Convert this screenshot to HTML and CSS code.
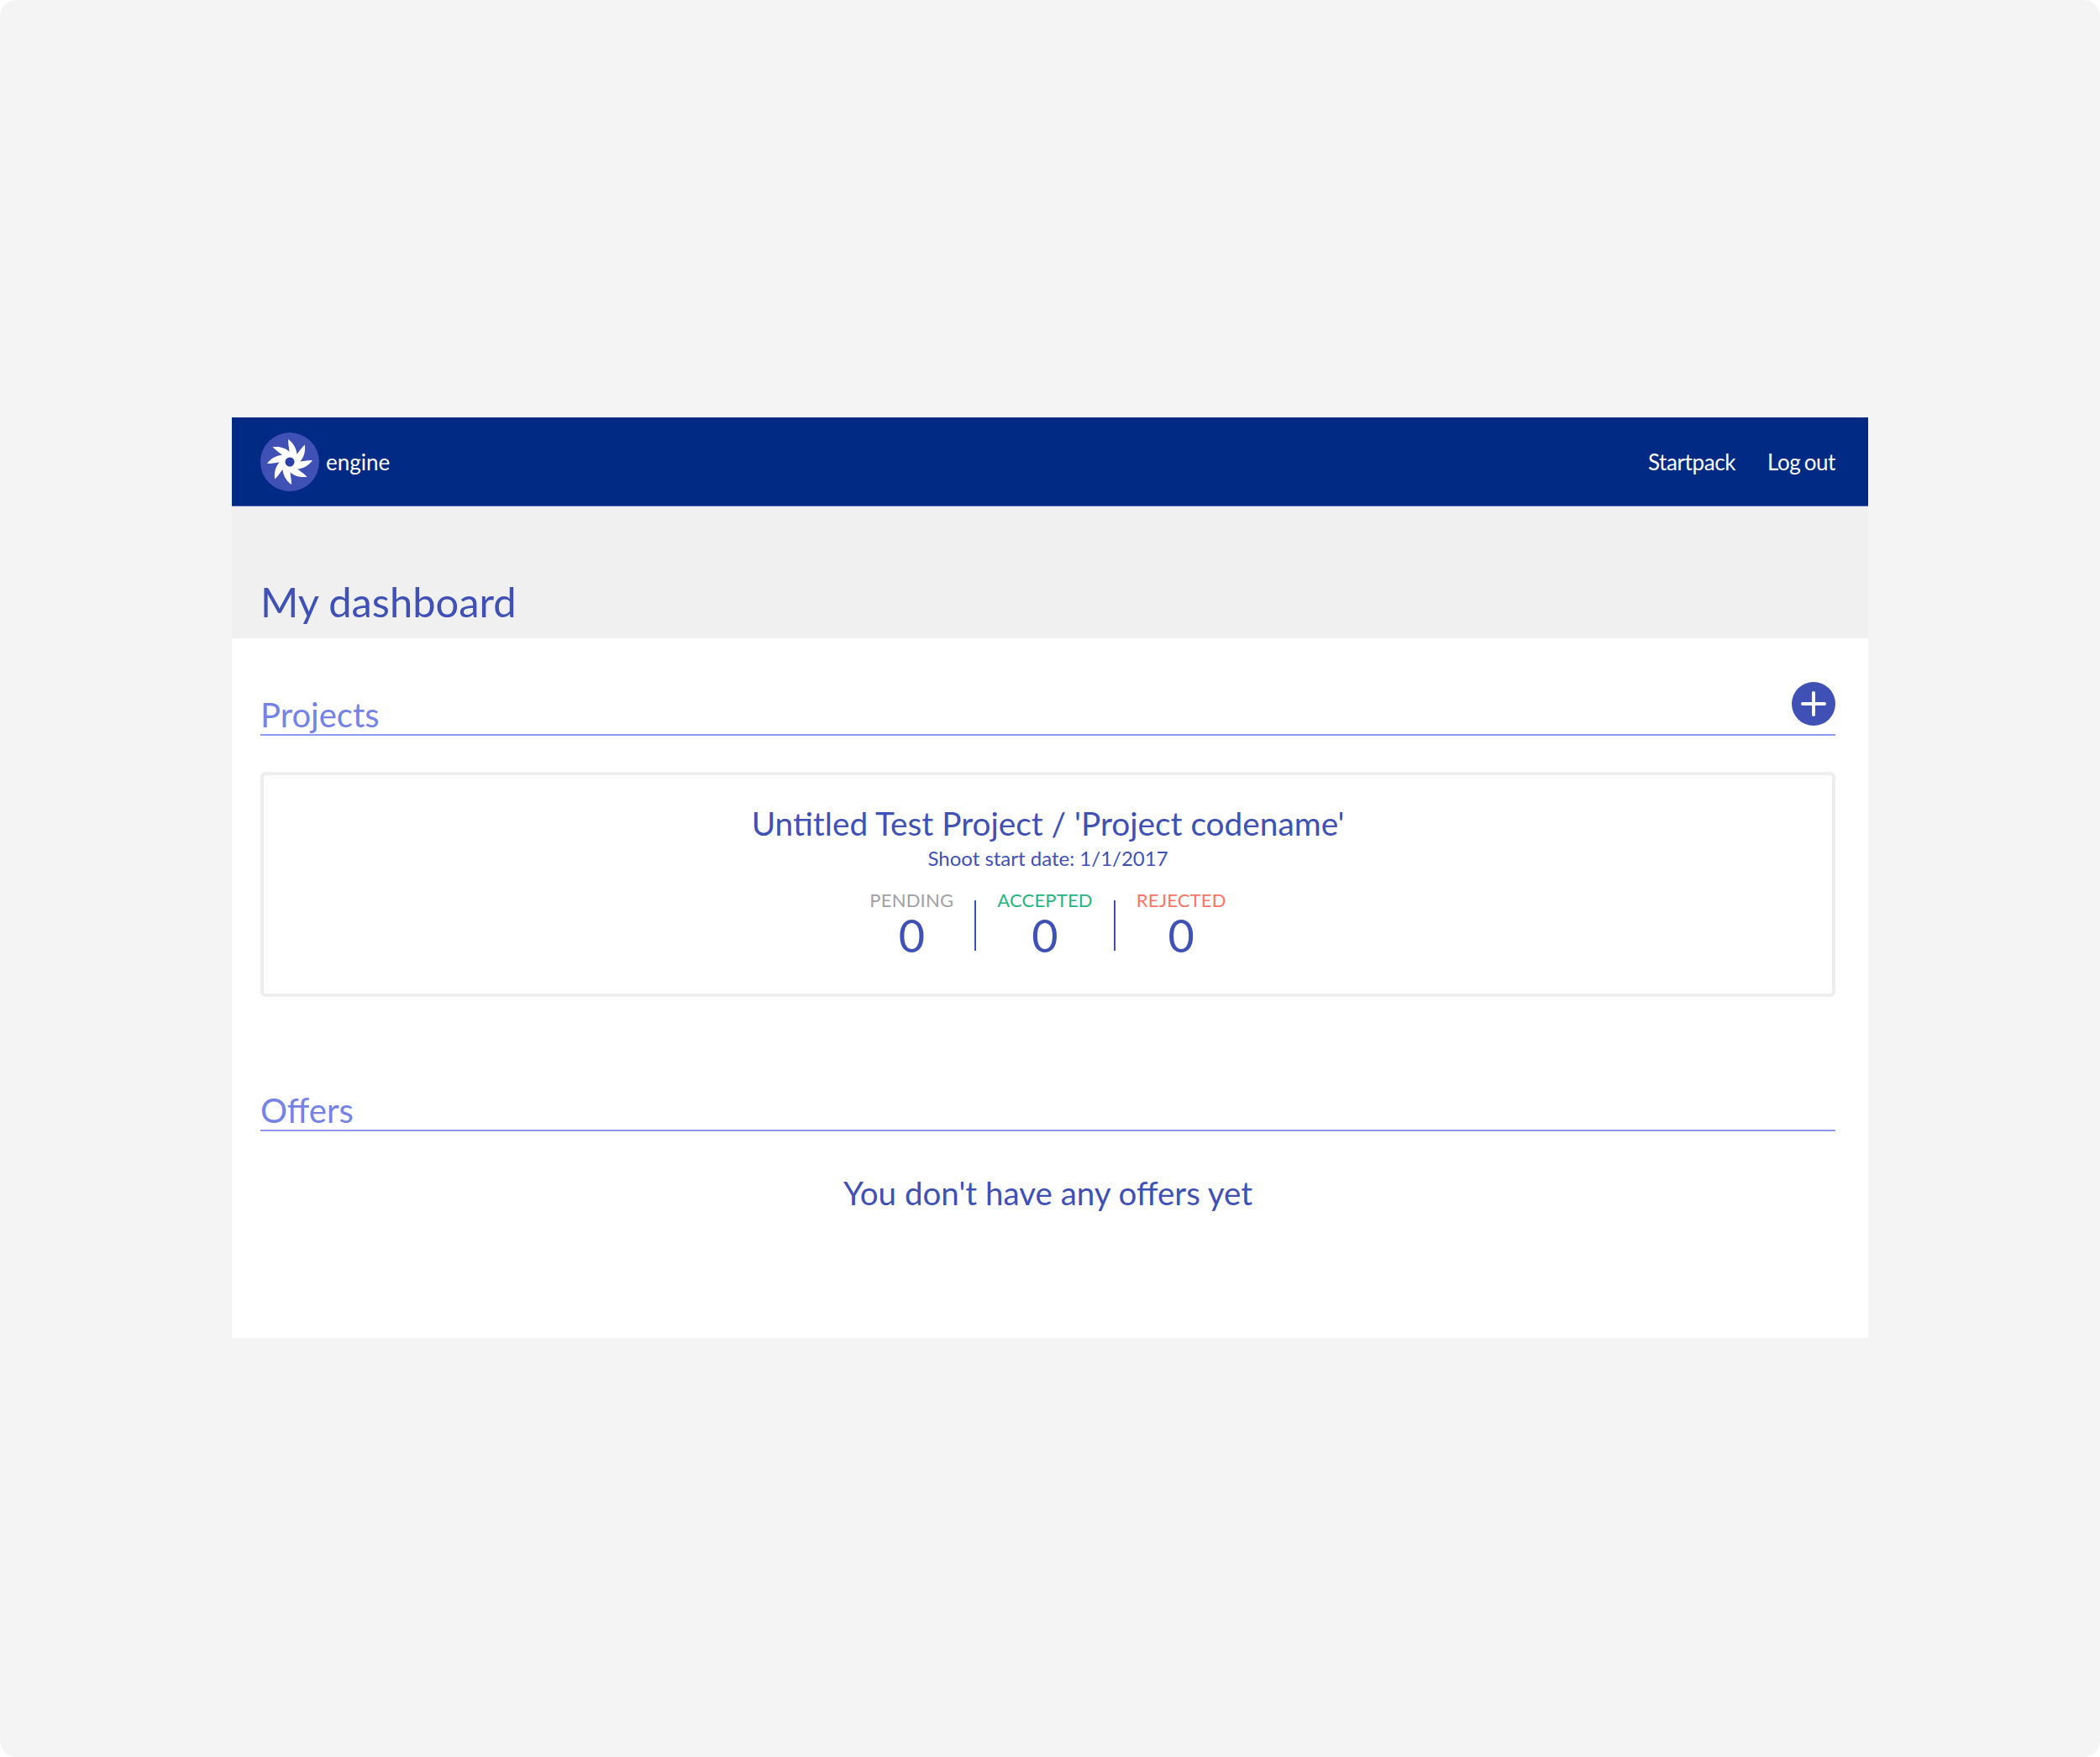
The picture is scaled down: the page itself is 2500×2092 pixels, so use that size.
FILE: index.html
```html
<!DOCTYPE html>
<html lang="en">
<head>
    <meta charset="UTF-8">
    <title>My dashboard - engine</title>
    <link rel="stylesheet" href="styles.css">
</head>
<body>
    <div class="page">
        <div class="app">
            <!-- Navigation Bar -->
            <nav class="topbar">
                <a class="brand" href="#">
                    <svg class="brand-logo" viewBox="-35 -35 70 70" aria-hidden="true">
                        <circle r="35" fill="#4051b5"/>
                        <g fill="#ffffff">
                            <path id="blade" d="M-2 -27 C4 -23 9.5 -15 8.5 -4 L0 -4 C0 -13 -2 -20 -2 -27 Z"/>
                            <use href="#blade" transform="rotate(45)"/>
                            <use href="#blade" transform="rotate(90)"/>
                            <use href="#blade" transform="rotate(135)"/>
                            <use href="#blade" transform="rotate(180)"/>
                            <use href="#blade" transform="rotate(225)"/>
                            <use href="#blade" transform="rotate(270)"/>
                            <use href="#blade" transform="rotate(315)"/>
                        </g>
                        <circle r="5.5" fill="#2c3ea6"/>
                    </svg>
                    <span>engine</span>
                </a>
                <ul class="topbar-links">
                    <li><a href="#">Startpack</a></li>
                    <li><a href="#">Log out</a></li>
                </ul>
            </nav>

            <!-- Page Title -->
            <header class="page-title">
                <h1>My dashboard</h1>
            </header>

            <!-- Main Content -->
            <main class="content">
                <section class="projects">
                    <div class="section-head">
                        <h2>Projects</h2>
                        <a class="add-button" href="#" aria-label="Add project">
                            <svg viewBox="0 0 52 52" aria-hidden="true">
                                <path d="M26 13 V39 M13 26 H39" stroke="#ffffff" stroke-width="4" stroke-linecap="round" fill="none"/>
                            </svg>
                        </a>
                    </div>

                    <div class="project-card">
                        <h3>Untitled Test Project / 'Project codename'</h3>
                        <p class="shoot-date">Shoot start date: 1/1/2017</p>
                        <div class="stats">
                            <div class="stat stat-pending">
                                <span class="stat-label">PENDING</span>
                                <span class="stat-value">0</span>
                            </div>
                            <div class="stat stat-accepted">
                                <span class="stat-label">ACCEPTED</span>
                                <span class="stat-value">0</span>
                            </div>
                            <div class="stat stat-rejected">
                                <span class="stat-label">REJECTED</span>
                                <span class="stat-value">0</span>
                            </div>
                        </div>
                    </div>
                </section>

                <section class="offers">
                    <div class="section-head">
                        <h2>Offers</h2>
                    </div>
                    <p class="empty-note">You don't have any offers yet</p>
                </section>
            </main>
        </div>
    </div>
</body>
</html>
```

FILE: styles.css
```css
/* Global Styles */
html, body {
    height: 100%;
}

body {
    margin: 0;
    background-color: #ffffff;
    font-family: 'Lato', sans-serif;
    color: #4051b5;
}

.page {
    box-sizing: border-box;
    min-height: 100%;
    padding: 497px 276px 0 276px;
    background-color: #f4f4f4;
    border-radius: 20px;
}

.app {
    background-color: #ffffff;
    height: 1096px;
}

/* Top Bar */
.topbar {
    height: 106px;
    padding: 0 39px 0 34px;
    display: flex;
    justify-content: space-between;
    align-items: center;
    background-color: #002a83;
    border-bottom: 1px solid #5a6cc4;
    box-sizing: border-box;
}

.topbar a {
    color: #ffffff;
    text-decoration: none;
    font-size: 26px;
}

.brand {
    display: flex;
    align-items: center;
    gap: 8px;
}

.brand-logo {
    width: 70px;
    height: 70px;
}

.topbar-links {
    list-style: none;
    display: flex;
    gap: 38px;
    margin: 0;
    padding: 0;
    letter-spacing: -0.4px;
    word-spacing: -2px;
}

/* Page Title */
.page-title {
    height: 157px;
    padding: 0 34px;
    box-sizing: border-box;
    display: flex;
    align-items: flex-end;
    background-color: #f0f0f0;
}

.page-title h1 {
    margin: 0 0 15px;
    font-size: 48.8px;
    font-weight: 400;
    line-height: 58px;
}

/* Sections */
.content {
    padding: 0 39px 0 34px;
}

.section-head {
    display: flex;
    justify-content: space-between;
    align-items: flex-end;
    border-bottom: 2px solid #8e99f3;
}

.section-head h2 {
    margin: 0;
    font-size: 40px;
    font-weight: 400;
    line-height: 46px;
    color: #7583e6;
}

.projects .section-head {
    height: 116px;
    box-sizing: border-box;
    align-items: flex-start;
    padding-top: 68px;
    position: relative;
}

.add-button {
    width: 52px;
    height: 52px;
    border-radius: 50%;
    background-color: #4051b5;
    position: absolute;
    right: 0;
    top: 52px;
}

.add-button svg {
    display: block;
}

/* Project Card */
.project-card {
    margin-top: 43px;
    height: 268px;
    box-sizing: border-box;
    padding-top: 33px;
    border: 4px solid #eeeeee;
    border-radius: 6px;
    text-align: center;
}

.project-card h3 {
    margin: 0;
    font-size: 38.8px;
    font-weight: 400;
    line-height: 48px;
}

.shoot-date {
    margin: 3px 0 0;
    font-size: 24px;
    line-height: 30px;
}

.stats {
    display: flex;
    justify-content: center;
    margin-top: 22px;
}

.stat {
    display: flex;
    flex-direction: column;
    align-items: center;
    padding: 0 25px 0 27px;
}

.stat:first-child {
    padding-left: 0;
}

.stat:last-child {
    padding-right: 0;
}

.stat + .stat {
    background: linear-gradient(#4051b5, #4051b5) left 13px / 2px 60px no-repeat;
}

.stat-label {
    font-size: 22px;
    line-height: 26px;
    letter-spacing: 0.2px;
}

.stat-value {
    font-size: 54px;
    line-height: 58px;
}

.stat-pending .stat-label {
    color: #a0a0a8;
}

.stat-accepted .stat-label {
    color: #26b47f;
}

.stat-rejected .stat-label {
    color: #ff7466;
}

/* Offers */
.offers {
    margin-top: 110px;
}

.offers .section-head {
    height: 48px;
}

.empty-note {
    margin: 49px 0 0;
    font-size: 38.5px;
    line-height: 48px;
    text-align: center;
}
```
